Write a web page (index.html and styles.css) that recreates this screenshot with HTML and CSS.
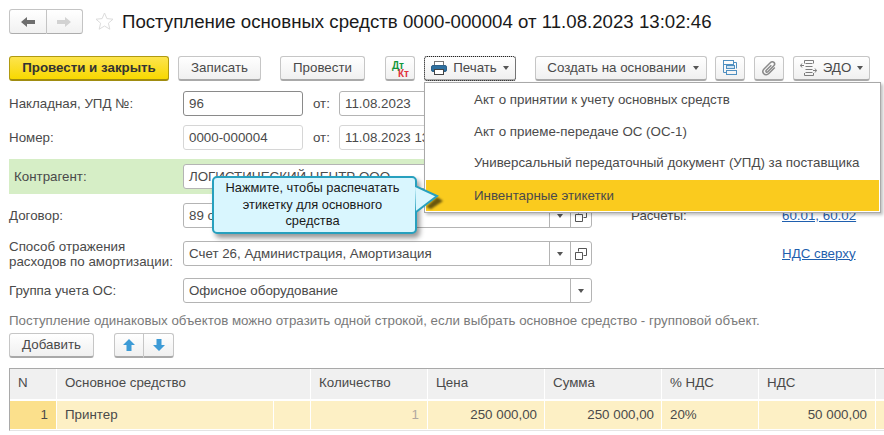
FILE: index.html
```html
<!DOCTYPE html>
<html lang="ru">
<head>
<meta charset="utf-8">
<title>Поступление основных средств</title>
<link rel="stylesheet" href="styles.css">
</head>
<body>
<div class="page">
  <header class="head">
    <div class="nav">
      <button class="nav-btn"><svg width="16" height="12" viewBox="0 0 16 12"><path d="M1 6l6-5v3h8v4H7v3z" fill="#6e6e6e"/></svg></button>
      <button class="nav-btn"><svg width="16" height="12" viewBox="0 0 16 12"><path d="M15 6L9 1v3H1v4h8v3z" fill="#d2d2d2"/></svg></button>
    </div>
    <svg class="star" width="19" height="19" viewBox="0 0 19 19"><path d="M9.500 1l2.400 5.600 6.100.6-4.600 4 1.400 6-5.300-3.200-5.300 3.200 1.400-6-4.600-4 6.100-.6z" fill="#fff" stroke="#dcdcdc"/></svg>
    <h1 class="title">Поступление основных средств 0000-000004 от 11.08.2023 13:02:46</h1>
  </header>

  <div class="toolbar">
    <button class="btn primary w-post">Провести и закрыть</button>
    <button class="btn w-save">Записать</button>
    <button class="btn w-run">Провести</button>
    <button class="btn icon dtkt"><span class="dt">Дт</span><span class="kt">Кт</span></button>
    <button class="btn print">
      <svg width="16" height="14" viewBox="0 0 16 14"><rect x="3.500" y="0.500" width="9" height="5" fill="#fff" stroke="#777"/><rect x="0.500" y="4.500" width="15" height="6" rx="1.500" fill="#2d6f9f" stroke="#2d5f87"/><rect x="3.500" y="8.500" width="9" height="5" fill="#fff" stroke="#444"/></svg>
      <span>Печать</span><i class="caret"></i>
    </button>
    <button class="btn w-create"><span>Создать на основании</span><i class="caret"></i></button>
    <button class="btn icon">
      <svg width="16" height="15" viewBox="0 0 16 15" fill="none" stroke="#4f8fc0"><rect x="1.500" y="0.500" width="10" height="4"/><rect x="4.500" y="5.500" width="8" height="3" fill="#cfe3f3"/><rect x="4.500" y="10.500" width="10" height="4"/><path d="M11.500 2.500h3v6M1.500 4.500v8h3"/></svg>
    </button>
    <button class="btn icon">
      <svg width="16" height="16" viewBox="0 0 16 16" fill="none" stroke="#8a8a8a" stroke-width="1.500"><path d="M13.800 7.500l-6 6c-1.500 1.500-3.800 1.500-5 .2s-1.200-3.300.2-4.700l6.500-6.500c1-1 2.500-1 3.400-.1s.9 2.400-.1 3.400l-6 6c-.5.500-1.200.500-1.600.1s-.4-1.100.1-1.600l5-5"/></svg>
    </button>
    <button class="btn edo">
      <svg width="17" height="16" viewBox="0 0 17 16" fill="none" stroke="#7d7d7d"><path d="M4.500 3.500v-3h9v3M4.500 13v2.500h9V13"/><path d="M5.500 3.500h7M5.500 6.500h7M5.500 9.500h7M5.500 12.500h7"/><path d="M4 5.500H.5M2 3.500l-1.500 2 1.500 2M13 10.500h3.500M15 8.500l1.500 2-1.500 2"/></svg>
      <span>ЭДО</span><i class="caret"></i>
    </button>
  </div>

  <div class="row r1">
    <label class="lbl">Накладная, УПД №:</label>
    <div class="field short focus">96</div>
    <span class="from">от:</span>
    <div class="field date">11.08.2023</div>
  </div>
  <div class="row r2">
    <label class="lbl">Номер:</label>
    <div class="field short soft">0000-000004</div>
    <span class="from">от:</span>
    <div class="field date soft">11.08.2023 13:02:46</div>
  </div>
  <div class="row r3 green">
    <label class="lbl">Контрагент:</label>
    <div class="field wide">ЛОГИСТИЧЕСКИЙ ЦЕНТР ООО</div>
  </div>
  <div class="row r4">
    <label class="lbl">Договор:</label>
    <div class="field wide"><span class="val">89 от 01.01.2023</span><b class="drop"><i class="caret"></i></b><b class="open"><svg width="12" height="12" viewBox="0 0 12 12" fill="none" stroke="#555"><path d="M3.500 3.500v-3h8v7h-3M.5 4.500h7v7h-7z"/></svg></b></div>
    <span class="calc">Расчеты:</span>
    <a class="link">60.01, 60.02</a>
  </div>
  <div class="row r5">
    <label class="lbl two">Способ отражения<br>расходов по амортизации:</label>
    <div class="field wide"><span class="val">Счет 26, Администрация, Амортизация</span><b class="drop"><i class="caret"></i></b><b class="open"><svg width="12" height="12" viewBox="0 0 12 12" fill="none" stroke="#555"><path d="M3.500 3.500v-3h8v7h-3M.5 4.500h7v7h-7z"/></svg></b></div>
    <a class="link vat">НДС сверху</a>
  </div>
  <div class="row r6">
    <label class="lbl">Группа учета ОС:</label>
    <div class="field wide"><span class="val">Офисное оборудование</span><b class="drop last"><i class="caret"></i></b></div>
  </div>

  <p class="note">Поступление одинаковых объектов можно отразить одной строкой, если выбрать основное средство - групповой объект.</p>

  <div class="tablebar">
    <button class="btn w-add">Добавить</button>
    <div class="updown">
      <button class="btn arrow"><svg width="12" height="12" viewBox="0 0 12 12"><path d="M6 0l6 6H8.500v6h-5V6H0z" fill="#3d9bd6"/></svg></button>
      <button class="btn arrow"><svg width="12" height="12" viewBox="0 0 12 12"><path d="M6 12l6-6H8.500V0h-5v6H0z" fill="#3d9bd6"/></svg></button>
    </div>
  </div>

  <div class="table">
    <div class="th">N</div><div class="th">Основное средство</div><div class="th">Количество</div><div class="th">Цена</div><div class="th">Сумма</div><div class="th">% НДС</div><div class="th">НДС</div><div class="th"></div>
    <div class="td num first">1</div><div class="td split"><span>Принтер</span><i></i></div><div class="td num muted">1</div><div class="td num amt">250 000,00</div><div class="td num amt">250 000,00</div><div class="td">20%</div><div class="td num">50 000,00</div><div class="td"></div>
  </div>

  <div class="menu">
    <div class="item">Акт о принятии к учету основных средств</div>
    <div class="item">Акт о приеме-передаче ОС (ОС-1)</div>
    <div class="item">Универсальный передаточный документ (УПД) за поставщика</div>
    <div class="item active">Инвентарные этикетки</div>
  </div>

  <div class="tip">
    Нажмите, чтобы распечатать этикетку для основного средства
    <svg class="tail" width="30" height="34" viewBox="0 0 30 34"><path class="tail-shadow" d="M22 12l-11 10 5 2 12-8z" fill="#4f420c" opacity=".85"/><path d="M0 1L22 11 1 27" fill="#d9f6fe" stroke="#27a0be" stroke-width="2"/></svg>
  </div>
</div>
</body>
</html>
```
FILE: styles.css
```css
* { box-sizing: border-box; }
html, body { margin: 0; padding: 0; background: #fff; }
.page {
  position: relative;
  width: 884px;
  height: 435px;
  overflow: hidden;
  font: 13.33px/16px "Liberation Sans", Arial, sans-serif;
  color: #4a4a4a;
}
button { font: inherit; color: inherit; padding: 0; }

.head { display: flex; align-items: center; height: 25px; margin: 9px 0 0 9px; }
.nav { display: flex; width: 74px; height: 25px; }
.nav-btn {
  flex: 1; display: flex; align-items: center; justify-content: center;
  background: linear-gradient(#fff, #f1f1f1);
  border: 1px solid #c4c4c4; border-bottom-color: #adadad;
}
.nav-btn:first-child { border-radius: 3px 0 0 3px; }
.nav-btn + .nav-btn { border-left: 0; border-radius: 0 3px 3px 0; }
.star { margin-left: 12px; }
.title { margin: 0 0 0 8px; font-size: 18.67px; font-weight: 400; color: #1a1a1a; line-height: 24px; white-space: nowrap; }

.toolbar { display: flex; align-items: center; height: 26px; margin: 21px 0 0 9px; }
.btn {
  height: 25px; display: flex; align-items: center; justify-content: center; gap: 6px;
  background: linear-gradient(#fff, #f0f0f0);
  border: 1px solid #c6c6c6; border-bottom: 2px solid #a9a9a9; border-radius: 3px;
  white-space: nowrap;
}
.primary { background: linear-gradient(#fde44e, #f8d800); border-color: #b09a10; border-bottom-color: #a08c10; color: #333; font-weight: 700; }
.w-post { width: 160px; margin-right: 9px; }
.w-save { width: 83px; margin-right: 19px; }
.w-run { width: 85px; margin-right: 20px; }
.icon { width: 30px; margin-right: 9px; }
.dtkt { position: relative; margin-right: 9px; font-size: 10px; font-weight: 700; line-height: 8px; display: block; }
.dt { position: absolute; left: 6px; top: 5px; color: #12963b; }
.kt { position: absolute; left: 12px; top: 13px; color: #e0323c; }
.print { width: 92px; margin-right: 19px; outline: 1px dotted #222; outline-offset: -1px; gap: 6px; }
.w-create { width: 172px; margin-right: 8px; gap: 7px; padding-left: 4px; }
.edo { width: 77px; gap: 6px; }
.caret { display: inline-block; width: 0; height: 0; border: 3.5px solid transparent; border-top: 4px solid #555; border-bottom: 0; }

.row { display: flex; align-items: center; padding-left: 9px; }
.lbl { width: 174px; flex: none; white-space: nowrap; }
.lbl.two { line-height: 15px; }
.r1 { height: 25px; margin-top: 10px; }
.r2 { height: 25px; margin-top: 9px; }
.r3 { height: 35px; margin-top: 9px; margin-left: 9px; padding-left: 5px; background: #d6eec6; width: 500px; }
.r3 .lbl { width: 169px; }
.r4 { height: 25px; margin-top: 9px; }
.r5 { height: 25px; margin-top: 13px; }
.r6 { height: 25px; margin-top: 12px; }
.field {
  height: 25px; display: flex; align-items: center; padding-left: 5px;
  background: #fff; border: 1px solid #b4b4b4; border-radius: 3px; white-space: nowrap; flex: none;
}
.focus { border-color: #8a8a8a; }
.soft { border-color: #d6d6d6; }
.short { width: 120px; }
.date { width: 150px; }
.from { margin: 0 14px 0 10px; width: 12px; }
.wide { width: 409px; overflow: hidden; padding-right: 0; }
.val { flex: 1; }
.drop, .open { width: 21px; height: 23px; flex: none; display: flex; align-items: center; justify-content: center; border-left: 1px solid #b4b4b4; }
.calc { margin-left: 39px; width: 151px; }
.link { color: #1f5fae; text-decoration: underline; white-space: nowrap; }
.vat { margin-left: 190px; }

.note { margin: 10px 0 0 9px; line-height: 16px; color: #7a7a7a; white-space: nowrap; }
.tablebar { display: flex; margin: 4px 0 0 9px; height: 25px; }
.w-add { width: 85px; margin-right: 20px; }
.updown { display: flex; }
.arrow { width: 30px; border-radius: 0; }
.arrow:first-child { border-radius: 3px 0 0 3px; }
.arrow + .arrow { border-left: 0; border-radius: 0 3px 3px 0; }

.table {
  display: grid;
  grid-template-columns: 46px 253px 116px 116px 116px 96px 116px 40px;
  grid-template-rows: 30px 28px;
  column-gap: 1px; row-gap: 2px;
  width: 900px; margin: 10px 0 0 9px;
  border-top: 1px solid #a9a9a9; border-left: 1px solid #a9a9a9; border-bottom: 1px solid #e4e4e4;
  padding-bottom: 1px;
}
.th { background: #f0f0f0; padding: 6px 8px; white-space: nowrap; }
.td { background: #fdf0c5; padding: 6px 8px; white-space: nowrap; position: relative; }
.num { text-align: right; }
.amt { padding-right: 7px; }
.first { background: #fbe08c; padding-right: 8px; }
.muted { color: #b0a8a0; }
.split i { position: absolute; left: 216px; top: 0; bottom: 0; width: 1px; background: #fff; }

.menu {
  position: absolute; left: 424px; top: 82px; width: 457px; height: 131px;
  padding: 1px; background: #fff; border: 1px solid #a9a9a9;
  box-shadow: 2px 2px 3px rgba(0,0,0,.25);
  display: flex; flex-direction: column;
}
.item { height: 32px; padding: 8px 0 0 48px; white-space: nowrap; }
.item.active { background: #facb1e; margin-top: 1px; }

.tip {
  position: absolute; left: 212px; top: 176px; width: 205px; height: 58px;
  padding: 2px 14px 0 10px; text-align: center; line-height: 16.5px; font-size: 12.87px; color: #1a1a1a;
  background: #d9f6fe; border: 2px solid #27a0be; border-radius: 5px;
  box-shadow: 3px 4px 5px rgba(0,0,0,.4);
}
.tail { position: absolute; left: 201px; top: 7px; }
.tail-shadow { filter: blur(1px); }
```
